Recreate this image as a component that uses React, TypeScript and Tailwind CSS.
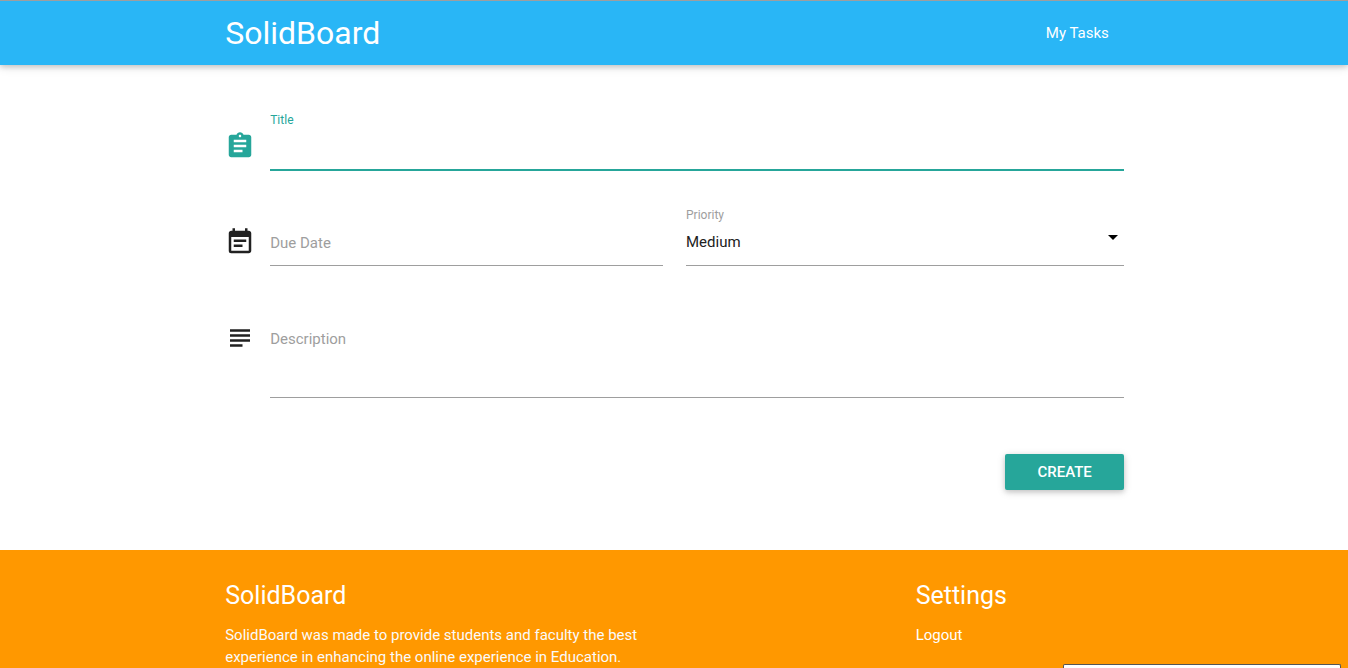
import { useState } from "react";
import { MdAssignment, MdEventNote, MdSubject } from "react-icons/md";

const priorities = ["Low", "Medium", "High"];

function Navbar() {
  return (
    <nav className="relative z-10 border-t border-[#9e9e9e] bg-[#29b6f6] text-white shadow-[0_2px_5px_0_rgba(0,0,0,0.16),0_2px_10px_0_rgba(0,0,0,0.12)]">
      <div className="mx-auto flex h-16 w-[70%] items-center justify-between pr-[22px] pl-[23px]">
        <a href="#" className="text-[32px] leading-[64px]">
          SolidBoard
        </a>
        <a href="#tasks" className="px-[15px] text-[15px] leading-[64px]">
          My Tasks
        </a>
      </div>
    </nav>
  );
}

function TaskForm() {
  const [title, setTitle] = useState("");
  const [dueDate, setDueDate] = useState("");
  const [priority, setPriority] = useState("Medium");
  const [description, setDescription] = useState("");

  return (
    <form
      className="mx-auto w-[70%] pt-12 pr-[22px] pb-[60px] pl-[23px]"
      onSubmit={(e) => e.preventDefault()}
    >
      <div className="flex gap-[15px]">
        <MdAssignment className="mt-[18px] size-[30px] shrink-0 text-[#26a69a]" />
        <div className="flex-1">
          <label htmlFor="title" className="block text-[12px] leading-[14px] text-[#26a69a]">
            Title
          </label>
          <input
            id="title"
            type="text"
            value={title}
            onChange={(e) => setTitle(e.target.value)}
            className="block h-11 w-full border-b-2 border-[#26a69a] text-[15px] outline-none"
          />
        </div>
      </div>

      <div className="mt-[37px] grid grid-cols-2 gap-[23px]">
        <div className="flex gap-[15px]">
          <MdEventNote className="mt-[19px] size-[30px] shrink-0" />
          <div className="relative flex-1 pt-[14px]">
            <label
              htmlFor="due-date"
              className={
                dueDate
                  ? "absolute top-0 left-0 text-[12px] leading-[14px] text-[#9e9e9e]"
                  : "absolute top-6 left-0 text-[15px] leading-[22px] text-[#9e9e9e]"
              }
            >
              Due Date
            </label>
            <input
              id="due-date"
              type="text"
              value={dueDate}
              onChange={(e) => setDueDate(e.target.value)}
              className="block h-11 w-full border-b border-[#9e9e9e] text-[15px] outline-none"
            />
          </div>
        </div>
        <div className="relative">
          <label htmlFor="priority" className="block text-[12px] leading-[14px] text-[#9e9e9e]">
            Priority
          </label>
          <select
            id="priority"
            value={priority}
            onChange={(e) => setPriority(e.target.value)}
            className="block h-11 w-full appearance-none border-b border-[#9e9e9e] pb-0.5 text-[15px] outline-none"
          >
            {priorities.map((p) => (
              <option key={p}>{p}</option>
            ))}
          </select>
          <svg
            viewBox="0 0 10 5"
            className="pointer-events-none absolute top-[27px] right-1.5 h-[5px] w-2.5 fill-black"
          >
            <path d="M0 0h10L5 5z" />
          </svg>
        </div>
      </div>

      <div className="mt-[38px] flex gap-[15px]">
        <MdSubject className="mt-[19px] size-[30px] shrink-0" />
        <div className="relative flex-1 pt-[14px]">
          <label
            htmlFor="description"
            className={
              description
                ? "absolute top-0 left-0 text-[12px] leading-[14px] text-[#9e9e9e]"
                : "absolute top-6 left-0 text-[15px] leading-[22px] text-[#9e9e9e]"
            }
          >
            Description
          </label>
          <textarea
            id="description"
            value={description}
            onChange={(e) => setDescription(e.target.value)}
            className="block h-20 w-full resize-none border-b border-[#9e9e9e] py-2 text-[15px] outline-none"
          />
        </div>
      </div>

      <div className="mt-14 flex justify-end">
        <button
          type="submit"
          className="h-9 rounded-xs bg-[#26a69a] px-8 text-[15px] font-medium text-white uppercase shadow-[0_2px_5px_0_rgba(0,0,0,0.16),0_2px_10px_0_rgba(0,0,0,0.12)]"
        >
          Create
        </button>
      </div>
    </form>
  );
}

function Footer() {
  return (
    <footer className="flex-1 bg-[#ff9800] pt-8 text-white">
      <div className="mx-auto grid w-[70%] grid-cols-12 gap-[22px] pr-[22px] pl-[23px]">
        <div className="col-span-6">
          <h5 className="mb-[14px] text-[25px] leading-[28px]">SolidBoard</h5>
          <p className="text-[15px] leading-[22px] text-[#fafafa]">
            SolidBoard was made to provide students and faculty the best experience in enhancing
            the online experience in Education.
          </p>
        </div>
        <div className="col-span-3 col-start-10">
          <h5 className="mb-[14px] text-[25px] leading-[28px]">Settings</h5>
          <ul>
            <li className="text-[15px] leading-[22px]">
              <a href="#logout">Logout</a>
            </li>
          </ul>
        </div>
      </div>
    </footer>
  );
}

export default function App() {
  return (
    <div className="flex min-h-screen flex-col bg-white font-[Roboto,sans-serif] text-[#212121]">
      <Navbar />
      <TaskForm />
      <Footer />
      {/* top edge of the popup docked to the bottom of the window */}
      <div className="fixed right-[7px] bottom-0 h-1 w-[278px] rounded-t-xs border border-b-0 border-[#555] bg-white" />
    </div>
  );
}
